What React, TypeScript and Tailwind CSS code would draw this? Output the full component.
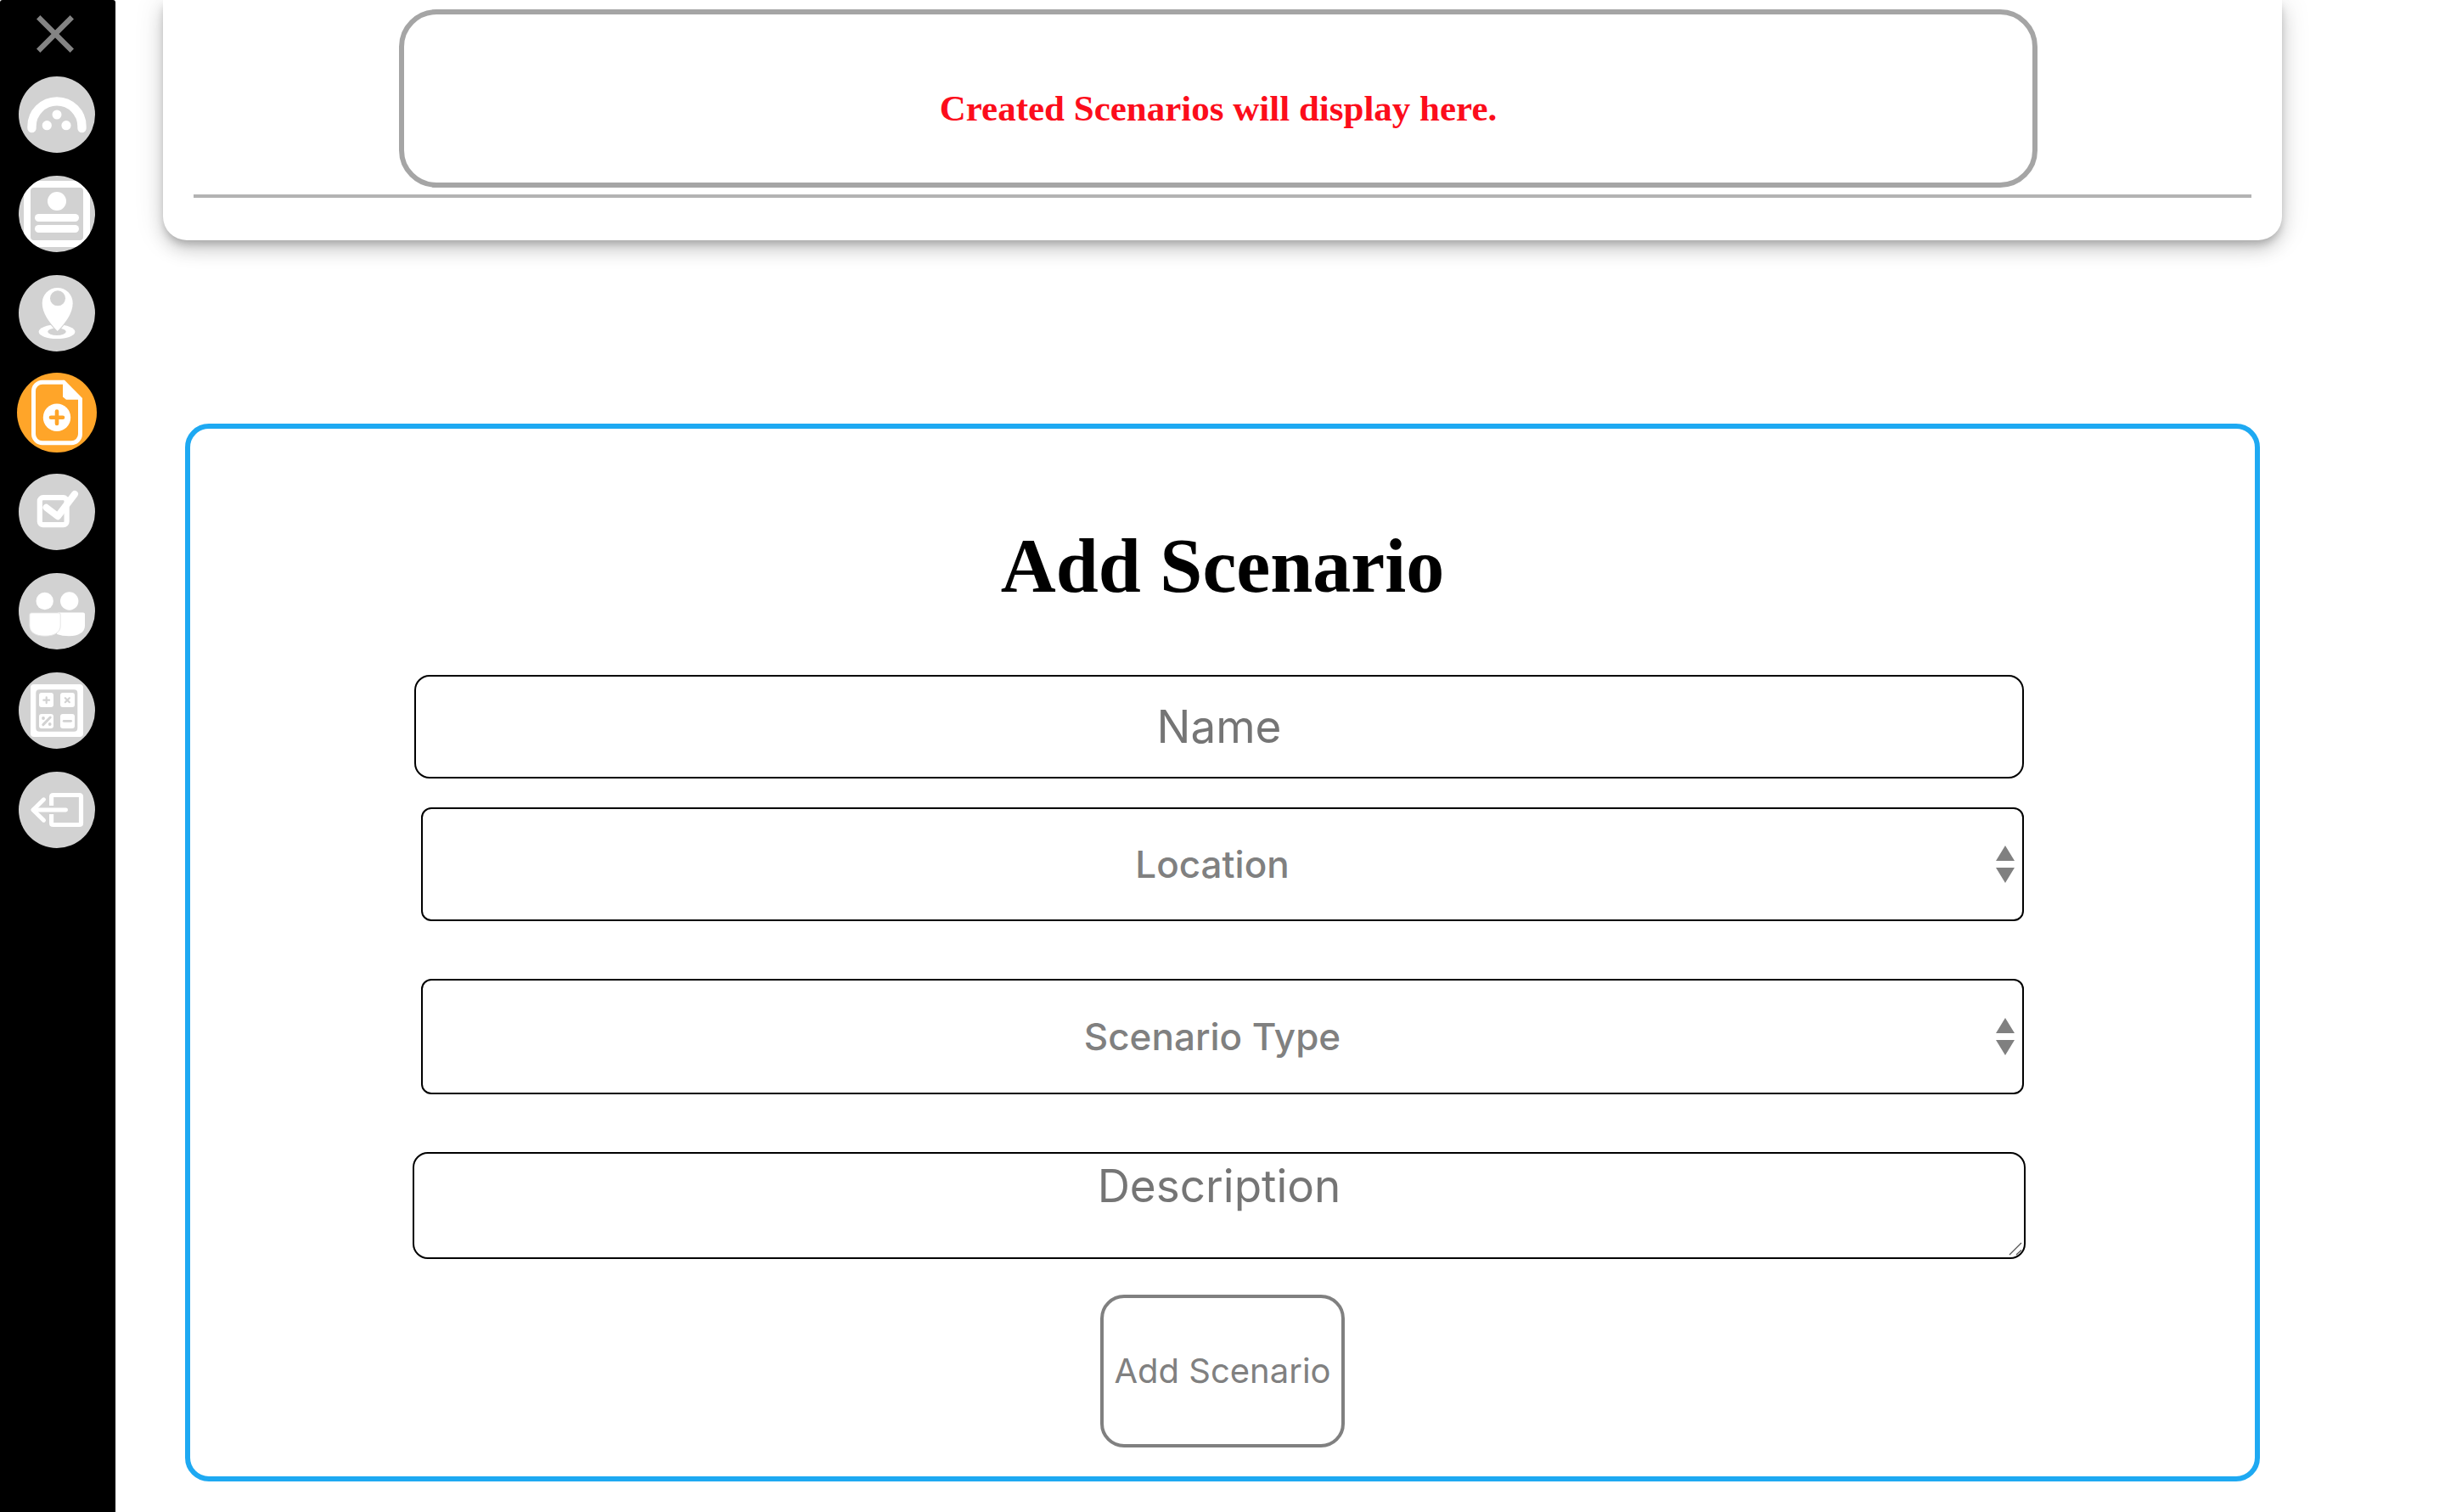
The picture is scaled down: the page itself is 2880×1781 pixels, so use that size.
import type { ReactNode } from "react";

const GREY = "#d2d2d2";
const ORANGE = "#ffa529";

function DashboardIcon() {
  return (
    <svg viewBox="0 0 90 90" className="size-full" aria-hidden="true">
      <path d="M15.5 61V58.9A29.5 29.5 0 0 1 74.5 58.9V61" fill="none" stroke="#fff" strokeWidth="10.4" strokeLinecap="round" />
      <circle cx="45" cy="45" r="5.5" fill="#fff" />
      <circle cx="33.3" cy="57.7" r="5.6" fill="#fff" />
      <circle cx="56" cy="57.7" r="5.6" fill="#fff" />
    </svg>
  );
}

function ProfileIcon() {
  return (
    <svg viewBox="0 0 90 90" className="size-full" aria-hidden="true">
      <rect x="6" y="6" width="78" height="78" fill="#fff" />
      <rect x="14" y="14" width="62" height="62" rx="4" fill={GREY} />
      <circle cx="45" cy="30" r="11" fill="#fff" />
      <rect x="19" y="45" width="52" height="9" rx="4.5" fill="#fff" />
      <rect x="19" y="58" width="52" height="9" rx="4.5" fill="#fff" />
    </svg>
  );
}

function LocationIcon() {
  return (
    <svg viewBox="0 0 90 90" className="size-full" aria-hidden="true">
      <ellipse cx="45" cy="66.8" rx="21.4" ry="8.3" fill="#fff" />
      <ellipse cx="45" cy="66.8" rx="10.8" ry="4.2" fill={GREY} />
      <path
        d="M45.7 66C36 56 27.7 45 27.7 33a18 18 0 0 1 36 0C63.7 45 55.4 56 45.7 66Z"
        fill="#fff"
        stroke={GREY}
        strokeWidth="2.4"
        paintOrder="stroke"
      />
      <circle cx="46" cy="27.3" r="9" fill={GREY} />
    </svg>
  );
}

function ScenarioIcon() {
  return (
    <svg viewBox="0 0 94 94" className="size-full" aria-hidden="true">
      <path
        d="M54.5 11.2H30A10.5 10.5 0 0 0 19.5 21.7V72.3A10.5 10.5 0 0 0 30 82.8H64A10.5 10.5 0 0 0 74.5 72.3V31"
        fill="none"
        stroke="#fff"
        strokeWidth="5"
      />
      <path d="M54 8.7H56L77 30V31.8H58L54 28.5Z" fill="#fff" />
      <circle cx="47" cy="52.7" r="16.2" fill="#fff" />
      <path d="M40 52.7H54M47 45.5V59.9" stroke={ORANGE} strokeWidth="4.6" strokeLinecap="round" />
    </svg>
  );
}

function TaskIcon() {
  return (
    <svg viewBox="0 0 90 90" className="size-full" aria-hidden="true" fill="none" stroke="#fff">
      <rect x="24.8" y="28.2" width="31.8" height="32" rx="4" strokeWidth="6.2" />
      <path d="M32.5 39.8L46 50.2L66 24" strokeWidth="8" strokeLinecap="round" strokeLinejoin="round" />
    </svg>
  );
}

function PeopleIcon() {
  return (
    <svg viewBox="0 0 90 90" className="size-full" aria-hidden="true">
      <circle cx="30.7" cy="33" r="10.2" fill="#fff" />
      <circle cx="59.7" cy="33" r="10.7" fill="#fff" />
      <path d="M46 46.5H76Q78 46.5 78 48.5V62C78 70 70 74.2 59.5 74.2Q51 74.2 45 72Z" fill="#fff" />
      <path
        d="M15 46.9H47Q49.2 46.9 49.2 49V62C49.2 70 42 74.2 31 74.2S12.8 70 12.8 62V49Q12.8 46.9 15 46.9Z"
        fill="#fff"
        stroke="#e2e2e2"
        strokeWidth="0.9"
      />
    </svg>
  );
}

function CalculatorIcon() {
  return (
    <svg viewBox="0 0 90 90" className="size-full" aria-hidden="true">
      <rect x="14" y="14" width="62" height="62" rx="4" fill="#fff" />
      <rect x="20.3" y="20.2" width="49" height="49.6" rx="4" fill={GREY} />
      <g fill="#fff">
        <rect x="24" y="24" width="17" height="17" rx="3" />
        <rect x="49" y="24" width="17" height="17" rx="3" />
        <rect x="24" y="49" width="17" height="17" rx="3" />
        <rect x="49" y="49" width="17" height="17" rx="3" />
      </g>
      <g stroke={GREY} strokeLinecap="round">
        <path d="M29.3 32.7H36.1M32.7 29.3V36.1" strokeWidth="2.2" />
        <path d="M54.8 30.2L59.8 35.2M59.8 30.2L54.8 35.2" strokeWidth="2.2" />
        <path d="M28.8 61.6L37.2 53" strokeWidth="3" />
        <path d="M53.2 57.3H61.6" strokeWidth="2.8" />
      </g>
      <circle cx="29" cy="54" r="1.9" fill={GREY} />
      <circle cx="36.7" cy="61" r="1.9" fill={GREY} />
    </svg>
  );
}

function LogoutIcon() {
  return (
    <svg viewBox="0 0 90 90" className="size-full" aria-hidden="true" fill="none" stroke="#fff">
      <path
        d="M38.6 40V29.5Q38.6 27.5 40.6 27.5H71.5Q73.5 27.5 73.5 29.5V60.5Q73.5 62.5 71.5 62.5H40.6Q38.6 62.5 38.6 60.5V50"
        strokeWidth="5.2"
      />
      <path d="M17 45H55.6" strokeWidth="4.8" strokeLinecap="round" />
      <path d="M29.5 32.8L17 45L29.5 57.2" strokeWidth="5" strokeLinecap="round" strokeLinejoin="round" />
    </svg>
  );
}

const navItems: { label: string; icon: ReactNode; active?: boolean }[] = [
  { label: "Dashboard", icon: <DashboardIcon /> },
  { label: "Profile", icon: <ProfileIcon /> },
  { label: "Locations", icon: <LocationIcon /> },
  { label: "Scenarios", icon: <ScenarioIcon />, active: true },
  { label: "Tasks", icon: <TaskIcon /> },
  { label: "People", icon: <PeopleIcon /> },
  { label: "Calculator", icon: <CalculatorIcon /> },
  { label: "Log out", icon: <LogoutIcon /> },
];

function Sidebar() {
  return (
    <aside className="w-[136px] shrink-0 rounded-t-[3px] bg-black pr-0.5">
      <button type="button" aria-label="Close menu" className="flex h-[76px] w-full items-center justify-center pt-1 pr-1">
        <svg viewBox="0 0 44 44" className="size-11" aria-hidden="true">
          <path d="M2.2 2.2L41.8 41.8M41.8 2.2L2.2 41.8" stroke="#848484" strokeWidth="6.2" />
        </svg>
      </button>
      <nav>
        <ul>
          {navItems.map((item) => (
            <li key={item.label} className="flex h-[117px] items-center justify-center">
              <a
                href="#"
                aria-label={item.label}
                className={
                  item.active
                    ? "block size-[94px] overflow-hidden rounded-full bg-[#ffa529]"
                    : "block size-[90px] overflow-hidden rounded-full bg-[#d2d2d2]"
                }
              >
                {item.icon}
              </a>
            </li>
          ))}
        </ul>
      </nav>
    </aside>
  );
}

function SelectField({ label, height }: { label: string; height: string }) {
  return (
    <div className={`relative mx-2.5 ${height}`}>
      <select
        aria-label={label}
        className="size-full appearance-none rounded-xl border-2 border-black bg-white pr-6 text-center text-[44px] font-medium text-[#808080] [text-align-last:center]"
      >
        <option>{label}</option>
      </select>
      <svg viewBox="0 0 22 44" className="pointer-events-none absolute inset-y-0 right-[11px] my-auto h-11 w-[22px]" aria-hidden="true">
        <path d="M11 0L22 18H0ZM0 26H22L11 44Z" fill="#808080" />
      </svg>
    </div>
  );
}

function ScenarioForm() {
  return (
    <form className="mx-[26px] mt-[216px] rounded-[28px] border-[6px] border-[#1ea9f2] px-[262px] pt-28 pb-[34px]">
      <h1 className="text-center font-['Liberation_Serif',serif] text-[90px] leading-[100px] font-bold text-black">Add Scenario</h1>
      <div className="mt-[78px] flex flex-col">
        <input
          type="text"
          aria-label="Name"
          placeholder="Name"
          className="mr-2.5 mb-[34px] ml-0.5 h-[122px] rounded-[18px] border-2 border-black text-center text-[53px] placeholder:text-[#757575]"
        />
        <SelectField label="Location" height="mb-[68px] h-[134px]" />
        <SelectField label="Scenario Type" height="mb-[68px] h-[136px]" />
        <div className="relative mr-2 h-[126px]">
          <textarea
            aria-label="Description"
            placeholder="Description"
            className="block size-full resize-none rounded-[18px] border-2 border-black pt-1.5 text-center text-[53px] leading-[64px] placeholder:text-[#757575]"
          />
          <svg viewBox="0 0 18 18" className="pointer-events-none absolute right-0.5 bottom-0.5 size-[18px]" aria-hidden="true">
            <path d="M1 15L15 1M9 15L15 9.5" stroke="#555" strokeWidth="1.3" />
          </svg>
        </div>
        <button
          type="button"
          className="mt-[42px] h-[180px] w-72 self-center rounded-[28px] border-4 border-[#808080] text-[40px] whitespace-nowrap text-[#808080]"
        >
          Add Scenario
        </button>
      </div>
    </form>
  );
}

export default function App() {
  return (
    <div className="flex min-h-screen bg-white font-['Inter',sans-serif]">
      <Sidebar />
      <main className="min-w-0 grow pr-48 pb-9 pl-14">
        <section className="rounded-b-[28px] bg-white px-9 pt-[11px] pb-[50px] shadow-[0_6px_10px_-2px_rgba(0,0,0,0.2),0_12px_20px_0_rgba(0,0,0,0.14),0_2px_36px_0_rgba(0,0,0,0.12)]">
          <div className="mr-[252px] mb-2 ml-[242px] flex h-[210px] items-center justify-center rounded-[44px] border-[6px] border-[#a5a5a5] pt-6">
            <h2 className="font-['Liberation_Serif',serif] text-[43px] leading-[48px] font-bold text-[#fc0d1b]">
              Created Scenarios will display here.
            </h2>
          </div>
          <hr className="h-1 border-0 bg-[#b3b3b3]" />
        </section>
        <ScenarioForm />
      </main>
    </div>
  );
}
